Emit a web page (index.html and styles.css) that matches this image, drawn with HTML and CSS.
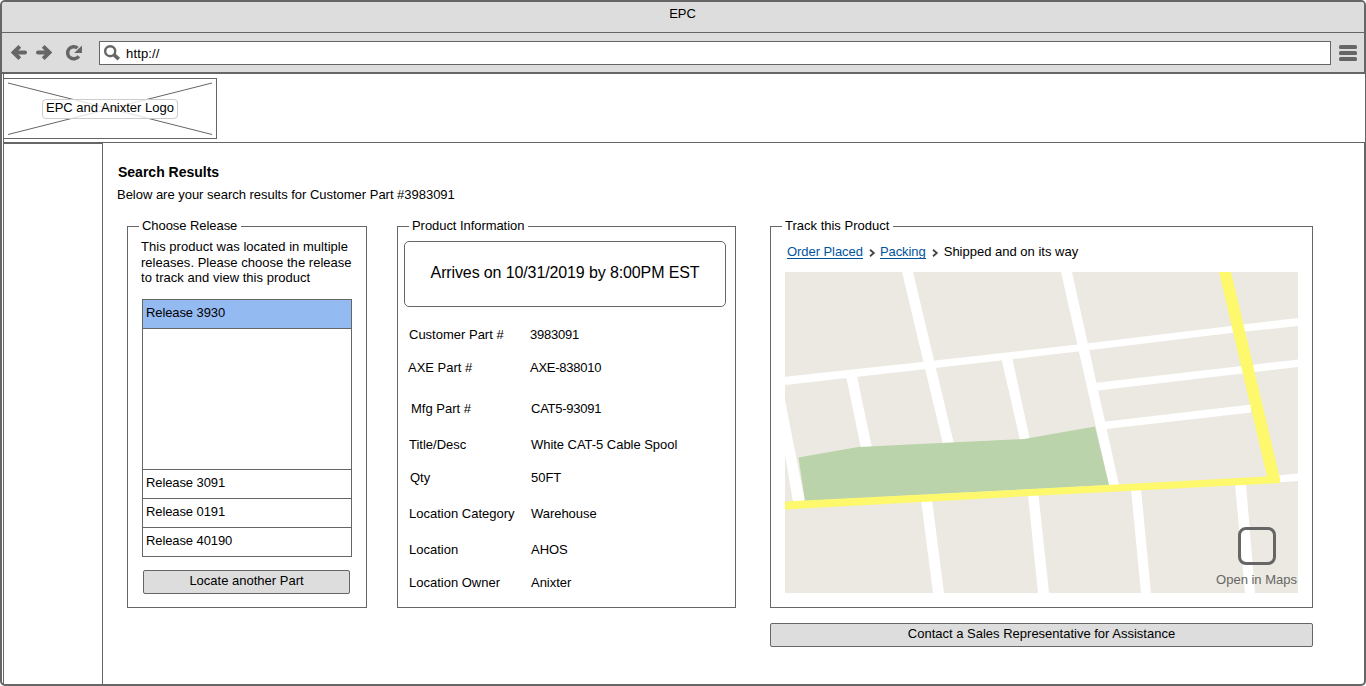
FILE: index.html
```html
<!DOCTYPE html>
<html lang="en">
<head>
<meta charset="utf-8">
<title>EPC</title>
<link rel="stylesheet" href="styles.css">
</head>
<body>
<div class="window">
  <div class="titlebar"><span>EPC</span></div>
  <div class="toolbar">
    <svg class="nav-icons" width="84" height="24" viewBox="8 41 84 24" fill="none" stroke="#666" stroke-width="4">
      <path d="M14 52.500H25" stroke-linecap="round"/><path d="M19.800 46.400L13.600 52.500L19.800 58.600"/>
      <path d="M38 52.500H49" stroke-linecap="round"/><path d="M43.200 46.400L49.400 52.500L43.200 58.600"/>
      <path d="M78.800 56.200A6.100 6.100 0 1 1 77.600 48" stroke-width="3.500"/>
      <path d="M82 45.500V53H74.200Z" fill="#666" stroke="none"/>
    </svg>
    <div class="address">
      <svg width="18" height="18" viewBox="0 0 18 18" fill="none" stroke="#666">
        <circle cx="6.200" cy="6.200" r="5" stroke-width="2.400"/><path d="M10 9.800L14.800 14.200" stroke-width="3.600"/>
      </svg>
      <span class="url">http://</span>
    </div>
    <svg class="menu-icon" width="18" height="16" viewBox="0 0 18 16" fill="#666">
      <rect y="0" width="18" height="4" rx="1.5"/><rect y="6" width="18" height="4" rx="1.5"/><rect y="12" width="18" height="4" rx="1.5"/>
    </svg>
  </div>
  <header class="header">
    <div class="logo">
      <svg width="212" height="59" viewBox="0 0 212 59" stroke="#666"><path d="M4 4L208 55.500M4 55.500L208 4"/></svg>
      <span class="logo-label">EPC and Anixter Logo</span>
    </div>
  </header>
  <div class="body">
    <aside class="sidebar"></aside>
    <main class="main">
      <h1>Search Results</h1>
      <p class="intro">Below are your search results for Customer Part #3983091</p>
      <div class="columns">
        <section class="group releases">
          <h2>Choose Release</h2>
          <p class="note">This product was located in multiple<br>releases. Please choose the release<br>to track and view this product</p>
          <ul class="list">
            <li class="selected">Release 3930</li>
            <li class="detail"></li>
            <li>Release 3091</li>
            <li>Release 0191</li>
            <li>Release 40190</li>
          </ul>
          <button class="btn locate">Locate another Part</button>
        </section>
        <section class="group product">
          <h2>Product Information</h2>
          <div class="arrival"><span>Arrives on 10/31/2019 by 8:00PM EST</span></div>
          <dl class="info">
            <dt>Customer Part #</dt><dd class="code">3983091</dd>
            <dt class="axe">AXE Part #</dt><dd class="code">AXE-838010</dd>
            <dt class="mfg">Mfg Part #</dt><dd class="in code">CAT5-93091</dd>
            <dt>Title/Desc</dt><dd class="in">White CAT-5 Cable Spool</dd>
            <dt class="qty">Qty</dt><dd class="in">50FT</dd>
            <dt>Location Category</dt><dd class="in">Warehouse</dd>
            <dt>Location</dt><dd class="in">AHOS</dd>
            <dt>Location Owner</dt><dd class="in">Anixter</dd>
          </dl>
        </section>
        <div class="tracking">
          <section class="group track">
            <h2>Track this Product</h2>
            <nav class="crumbs">
              <a>Order Placed</a>
              <svg width="7" height="8" viewBox="0 0 7 8"><path d="M1 .8L4.800 4L1 7.200" fill="none" stroke="#444" stroke-width="1.800"/></svg>
              <a>Packing</a>
              <svg width="7" height="8" viewBox="0 0 7 8"><path d="M1 .8L4.800 4L1 7.200" fill="none" stroke="#444" stroke-width="1.800"/></svg>
              <span>Shipped and on its way</span>
            </nav>
            <div class="map">
              <svg width="513" height="321" viewBox="785 272 513 321">
                <path fill="#ebe9e1" d="M785 272h513v321h-513z"/>
                <g fill="#fff">
                  <path d="M902 272H913L954 444H943Z"/>
                  <path d="M1061 272H1072L1119 485H1109Z"/>
                  <path d="M785 400L805 502H793L785 455Z"/>
                  <path d="M785 376.800L922 362L1078 344.500L1231 326L1298 318V326L1231 333L1078 351.500L922 369.500L785 385Z"/>
                  <path d="M846 376H857L872 448H861Z"/>
                  <path d="M1001 357H1012L1030 440H1020Z"/>
                  <path d="M1094 383L1298 359.500V367L1094 391Z"/>
                  <path d="M1102 422L1251 404.500V412.500L1102 429.500Z"/>
                  <path d="M1278 475.500L1298 473.500V481L1278 482.500Z"/>
                  <path d="M921 500H932L944 593H933Z"/>
                  <path d="M1028 495H1038.500L1049 593H1038Z"/>
                  <path d="M1131 489H1141L1151 593H1141Z"/>
                  <path d="M1235 484H1246L1255 593H1245Z"/>
                </g>
                <path fill="#bbd3ab" d="M798.500 457.500L858 447L1024 439L1095 426.500L1109 485L805 501Z"/>
                <path fill="#fef86c" d="M785 501.500L1050 488L1267 476.500L1219 272H1231L1280 479V483L1050 495L785 509.500Z"/>
              </svg>
              <div class="open-maps"><i></i><span>Open in Maps</span></div>
            </div>
          </section>
          <button class="btn contact">Contact a Sales Representative for Assistance</button>
        </div>
      </div>
    </main>
  </div>
</div>
</body>
</html>
```
FILE: styles.css
```css
* { box-sizing: border-box; margin: 0; padding: 0; }
body {
  width: 1366px; height: 686px; overflow: hidden; background: #fff;
  font: 13px/15px "Liberation Sans", Arial, sans-serif; color: #000;
  white-space: nowrap;
}
svg { display: block; flex: none; }
.window {
  width: 1366px; height: 686px; border: 2px solid #666;
  border-radius: 5px; display: flex; flex-direction: column;
}
.titlebar {
  height: 31px; flex: none; background: #ddd; border-bottom: 1px solid #666; border-radius: 3px 3px 0 0;
  text-align: center; padding: 4px 1px 0 0;
}
.toolbar {
  height: 41px; flex: none; background: #ddd; border-bottom: 2px solid #666;
  display: flex; align-items: flex-start; padding: 8px 7px 0 6px;
}
.address {
  flex: 1; height: 24px; margin-left: 7px; border: 1px solid #666; background: #fff;
  display: flex; padding: 3px 0 0 4px;
}
.url { margin-left: 4px; padding-top: 1px; letter-spacing: .15px; }
.menu-icon { margin: 4px 0 0 8px; }
.header {
  height: 69px; flex: none; margin: 0 -1px 0 1px; padding-top: 4px; background: #fff;
  border: 1px solid #666; border-width: 0 0 1px 1px;
}
.logo { width: 214px; height: 61px; margin-left: -1px; border: 1px solid #666; display: grid; place-items: center; }
.logo > * { grid-area: 1 / 1; }
.logo-label {
  height: 20px; padding: 0 3px; margin-top: 1px; border: 1px solid #ccc; border-radius: 4px;
  background: rgba(255, 255, 255, .8); z-index: 1;
}
.body { flex: 1; display: flex; }
.sidebar { width: 100px; margin-left: 1px; border: 1px solid #666; border-bottom: 0; }
.main { flex: 1; padding: 21px 0 0 14px; }
h1 { margin-left: 1px; font-size: 14px; line-height: 16px; }
.intro { margin-top: 7px; letter-spacing: -.02px; }
.columns { display: flex; align-items: flex-start; margin: 24px 0 0 10px; }
.group { border: 1px solid #666; height: 382px; }
h2 {
  width: max-content; font-size: 13px; font-weight: 400; line-height: 15px;
  background: #fff; margin: -9px 0 0 11px; padding: 0 4px 0 3px;
}
.releases { width: 240px; }
.releases h2, .product h2 { letter-spacing: -.06px; }
.note { margin: 6px 0 0 13px; line-height: 15.5px; letter-spacing: .03px; }
.list { list-style: none; width: 210px; margin: 13px 0 0 14px; border: 1px solid #666; }
.list li { height: 29px; padding: 5px 0 0 3px; border-bottom: 1px solid #666; letter-spacing: -.1px; }
.list li.selected { background: #94baf2; }
.list li.detail { height: 141px; }
.list li:last-child { border-bottom: 0; height: 28px; }
.btn {
  display: block; height: 24px; border: 1px solid #666; border-radius: 2px; background: #ddd;
  font: inherit; color: #000; text-align: center; padding-bottom: 3px;
}
.locate { width: 207px; margin: 13px 0 0 15px; }
.product { width: 339px; margin-left: 30px; }
.arrival {
  width: 322px; height: 66px; margin: 8px 0 0 6px; border: 1px solid #666; border-radius: 5px;
  text-align: center; padding-top: 21px; font-size: 16px; line-height: 19px; letter-spacing: -.12px;
}
.info {
  display: grid; grid-template-columns: 121px 1fr; margin: 20px 0 0 11px;
  grid-template-rows: 33px 41px 36px 33px 36px 36px 33px 15px;
}
.info .axe { margin-left: -1px; }
.info .mfg { margin-left: 2px; }
.info .qty, .info .in { margin-left: 1px; }
.info .in { letter-spacing: -.04px; }
.info .code { letter-spacing: -.25px; }
.tracking { margin-left: 34px; }
.track { width: 543px; }
.crumbs { display: flex; align-items: center; margin: 11px 0 0 16px; }
.crumbs a { color: #00549e; border-bottom: 1px solid #00549e; height: 15px; line-height: 16px; letter-spacing: -.06px; }
.crumbs svg { margin: 2px 4px 0 6px; }
.crumbs svg + span { margin-left: 1px; }
.map { position: relative; margin: 13px 0 0 14px; width: 513px; height: 321px; }
.open-maps {
  position: absolute; right: 1px; bottom: 6px; color: #666;
  display: flex; flex-direction: column; align-items: center;
}
.open-maps i { width: 38px; height: 38px; border: 3px solid #666; border-radius: 8px; margin-bottom: 7px; }
.contact { width: 543px; height: 24px; margin-top: 15px; }
```
